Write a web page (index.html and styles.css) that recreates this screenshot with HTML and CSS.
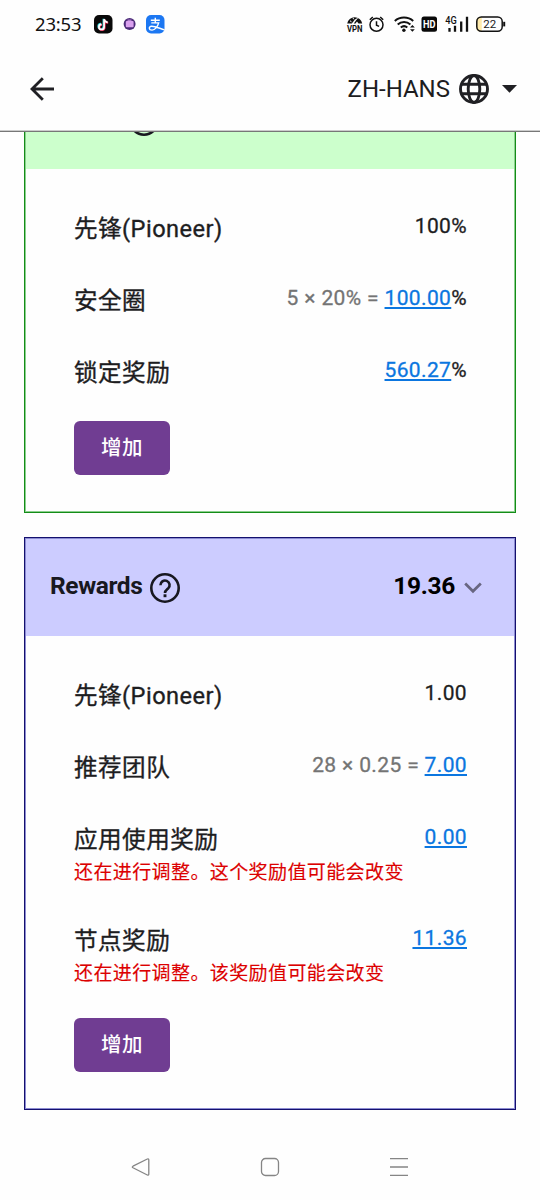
FILE: index.html
```html
<!DOCTYPE html>
<html lang="zh-Hans">
<head>
<meta charset="utf-8">
<title>Rewards</title>
<link rel="stylesheet" href="styles.css">
</head>
<body>
<div class="screen">
  <div class="status">
    <span class="clock">23:53</span>
    <svg class="apps" width="72" height="20" viewBox="0 0 72 20">
      <rect x="0" y="1" width="18.500" height="18.500" rx="5" fill="#090909"/>
      <g fill="none" stroke-width="2.100">
        <path d="M9.600 4.800v7.700a2.600 2.600 0 1 1-2.600-2.600M9.600 4.800c.3 2 1.600 3.100 3.600 3.200" stroke="#35dfe3"/>
        <path d="M10.600 5.600v7.700a2.600 2.600 0 1 1-2.600-2.600M10.600 5.600c.3 2 1.600 3.100 3.600 3.200" stroke="#f52f59"/>
        <path d="M10.100 5.200v7.700a2.600 2.600 0 1 1-2.600-2.600M10.100 5.200c.3 2 1.600 3.100 3.600 3.200" stroke="#fff" stroke-width="1.700"/>
      </g>
      <circle cx="35.600" cy="10" r="6" fill="#4b2a78"/>
      <rect x="31.800" y="7" width="7.800" height="6.200" rx="1" fill="#d9a0ee"/>
      <path d="M33.500 6.200h4" stroke="#d9a0ee"/>
      <rect x="52" y="1" width="18.500" height="18.500" rx="5" fill="#1c77f2"/>
      <g fill="none" stroke="#fff" stroke-width="1.400">
        <path d="M56.800 6.300h9M61.300 3.800v5M57.300 8.900h7.400c-1 3.600-3.700 7.200-6.600 7.200-3.600 0-3.600-3.700-.6-3.900 3.600-.2 8 2.200 13 3.700"/>
      </g>
    </svg>
    <svg class="system" width="166" height="24" viewBox="0 0 166 24">
      <path d="M1.200 11.500a7.600 7.600 0 0 1 15 0h-3.700l-1.500-2-1.500 2H7.800l2.700-3.800-1.200-.8-3.500 4.600z" fill="#111"/>
      <path d="M4 8.800l1.500 1M7 6l.8 1.300M11.500 5.800l-1.200 2" stroke="#fefefe" stroke-width="1"/>
      <text x="8.700" y="20" text-anchor="middle" textLength="15.500" lengthAdjust="spacingAndGlyphs" class="vpn">VPN</text>
      <g fill="none" stroke="#111" stroke-width="1.500">
        <circle cx="30.500" cy="12.800" r="6.500"/>
        <path d="M30.500 9.300v3.900l2.600 1.200M23.800 7.800l3-2.800M37.200 7.800l-3-2.800"/>
      </g>
      <g fill="none" stroke="#111" stroke-width="2">
        <path d="M48.800 9c5.100-4.600 13.300-4.600 18.400 0M51.700 12.400c3.600-3.200 9.100-3.200 12.700 0M54.800 15.500c2-1.700 4.500-1.700 6.500 0"/>
      </g>
      <circle cx="57.900" cy="18.300" r="1.700" fill="#111"/>
      <path d="M64 15.500l2.400-2.600 2.400 2.600zM64 17.200l2.400 2.600 2.400-2.600z" fill="#111"/>
      <rect x="75.500" y="4.500" width="15.500" height="15.300" rx="2.500" fill="#090909"/>
      <text x="83.200" y="15.900" text-anchor="middle" textLength="12.500" lengthAdjust="spacingAndGlyphs" class="hd">HD</text>
      <text x="99.300" y="12.300" textLength="11.500" lengthAdjust="spacingAndGlyphs" class="net">4G</text>
      <path d="M103.500 16v3.800M109 13.800v6M115.200 9.600v10.200M121 4.700v15.100" stroke="#111" stroke-width="2.300"/>
      <path d="M135.800 5.300h-3.500a4 4 0 0 0-2 4v6a4 4 0 0 0 2 4h3.500z" fill="#ffebad"/>
      <rect x="130.800" y="4.900" width="25.400" height="14.400" rx="4.500" fill="none" stroke="#111" stroke-width="1.500"/>
      <path d="M158.200 9.800v4.600" stroke="#111" stroke-width="2"/>
      <text x="143.800" y="16.200" text-anchor="middle" class="level">22</text>
    </svg>
  </div>

  <header class="topbar">
    <svg width="24" height="24" viewBox="0 0 24 24" fill="none" stroke="#202024" stroke-width="2.800"><path d="M24 12H2M12.800 1.200L2 12l10.800 10.800"/></svg>
    <div class="lang">
      <span>ZH-HANS</span>
      <svg width="30" height="30" viewBox="0 0 30 30" fill="none" stroke="#202024" stroke-width="2.900">
        <circle cx="15" cy="15" r="13.500"/><ellipse cx="15" cy="15" rx="5.800" ry="13.500"/><path d="M2.500 10.300h25M2.500 19.700h25"/>
      </svg>
      <svg class="caret" width="15" height="8" viewBox="0 0 15 8"><path d="M0 0h15L7.500 7.800z" fill="#202024"/></svg>
    </div>
  </header>

  <main class="content">
    <section class="card green">
      <div class="card-head">
        <svg class="help" width="30" height="30" viewBox="0 0 30 30"><circle cx="15" cy="15" r="13.700" fill="none" stroke="#181820" stroke-width="2.600"/></svg>
      </div>
      <div class="card-body">
        <div class="row"><div class="label">先锋(Pioneer)</div><div class="value">100%</div></div>
        <div class="row"><div class="label">安全圈</div><div class="value"><span class="calc">5 × 20% = </span><a>100.00</a>%</div></div>
        <div class="row"><div class="label">锁定奖励</div><div class="value"><a>560.27</a>%</div></div>
        <button class="btn">增加</button>
      </div>
    </section>

    <section class="card blue">
      <div class="card-head">
        <h2 class="title">Rewards</h2>
        <svg class="help" width="30" height="30" viewBox="0 0 30 30" fill="none" stroke="#181820">
          <circle cx="15" cy="15" r="13.700" stroke-width="2.600"/>
          <path d="M10.400 12.200a4.600 4.600 0 1 1 7.800 3.200c-1.700 1.600-3.200 2.300-3.200 4.500" stroke-width="2.600"/>
          <path d="M15 21.300v2.900" stroke-width="2.900"/>
        </svg>
        <span class="total">19.36</span>
        <svg class="chev" width="18" height="12" viewBox="0 0 18 12" fill="none" stroke="#686681" stroke-width="2.700"><path d="M1.200 1.500L9 9.300l7.800-7.800"/></svg>
      </div>
      <div class="card-body">
        <div class="row"><div class="label">先锋(Pioneer)</div><div class="value">1.00</div></div>
        <div class="row"><div class="label">推荐团队</div><div class="value"><span class="calc">28 × 0.25 = </span><a>7.00</a></div></div>
        <div class="row"><div class="label">应用使用奖励<p class="note">还在进行调整。这个奖励值可能会改变</p></div><div class="value"><a>0.00</a></div></div>
        <div class="row"><div class="label">节点奖励<p class="note">还在进行调整。该奖励值可能会改变</p></div><div class="value"><a>11.36</a></div></div>
        <button class="btn">增加</button>
      </div>
    </section>
  </main>

  <nav class="navbar">
    <svg width="20" height="20" viewBox="0 0 20 20"><path d="M2 9.200L16.300 2q1.500-.6 1.500 1v14q0 1.600-1.500 1L2 10.800q-1.400-.8 0-1.600z"/></svg>
    <svg width="20" height="20" viewBox="0 0 20 20"><rect x="1.500" y="1.500" width="17" height="17" rx="4"/></svg>
    <svg width="20" height="20" viewBox="0 0 20 20"><path d="M1 1.700h18M1 10h18M1 18.300h18"/></svg>
  </nav>
</div>
</body>
</html>
```
FILE: styles.css
```css
* { box-sizing: border-box; }
body {
  margin: 0;
  background: #fefefe;
  color: #1d1d1f;
  font-family: Roboto, "Noto Sans CJK SC", sans-serif;
}
.screen { width: 540px; height: 1200px; display: flex; flex-direction: column; overflow: hidden; }
svg { display: block; flex: none; }

.status { height: 48px; padding: 0 28px 0 35px; display: flex; align-items: center; }
.clock { width: 59px; font: 18.5px/24px "Noto Sans", sans-serif; letter-spacing: -0.2px; white-space: nowrap; color: #111; }
.system { margin-left: auto; }
.vpn { font: 700 9.5px Roboto, sans-serif; fill: #111; }
.hd { font: 700 10.5px Roboto, sans-serif; fill: #fff; }
.net { font: 500 10px Roboto, sans-serif; fill: #111; }
.level { font: 11.5px Roboto, sans-serif; fill: #222; }

.topbar {
  height: 84px;
  padding: 0 23px 1px 30px;
  display: flex;
  align-items: center;
  justify-content: space-between;
  border-bottom: 1px solid #777;
  box-shadow: inset 0 -1px #ccc;
  flex: none;
}
.lang { display: flex; align-items: center; font-size: 24px; }
.lang span { margin-right: 9px; }
.caret { margin-left: 13px; }

.content { height: 1002px; flex: none; overflow: hidden; padding: 0 24px; }
.card { border: 1px solid; padding: 1px; margin-bottom: 24px; }
.green { margin-top: -62px; height: 443px; border-color: #148c18; background: #8cd08e; }
.blue { height: 573px; border-color: #14106e; background: #8c8cd2; }
.card-head { height: 97px; padding: 0 32px 0 24px; display: flex; align-items: center; }
.green .card-head { background: #ccffcc; padding-left: 103px; }
.blue .card-head { background: #ccccff; }
.card-body { height: calc(100% - 97px); background: #fefefe; padding: 24px 47px 0 47.5px; }
.title { margin: 0; width: 100px; font-size: 24.5px; font-weight: 700; line-height: 30px; letter-spacing: -0.4px; color: #181820; }
.blue .title, .total { margin-bottom: 4px; }
.help { margin-top: 1px; }
.total { margin-left: auto; font-size: 24.5px; font-weight: 700; line-height: 30px; letter-spacing: -0.3px; color: #000; }
.chev { margin: 1px 0 0 9px; }

.row { display: flex; justify-content: space-between; padding: 18px 0; }
.label { padding-left: 0.5px; font-size: 23.6px; font-weight: 400; -webkit-text-stroke: 0.35px; letter-spacing: 0.45px; line-height: 37px; height: 36px; }
.row:has(.note) { height: 101px; }
.note { margin: -1px 0 0; color: #dc0000; font-size: 19px; line-height: 29px; -webkit-text-stroke: 0.15px; letter-spacing: 0.4px; }
.value { font-size: 21px; letter-spacing: 0.36px; line-height: 31px; height: 30px; white-space: pre; -webkit-text-stroke: 0.3px; }
.calc { color: #747474; }
.value a { color: #0b76e0; text-decoration: underline; text-decoration-thickness: 2px; text-underline-offset: 2px; }
.btn {
  display: block;
  width: 96px;
  height: 54px;
  margin: 12px 0 0 0.5px;
  border: 0;
  border-radius: 6px;
  background: #703d92;
  color: #fff;
  padding: 0;
  font: 500 20.5px/55px Roboto, "Noto Sans CJK SC", sans-serif;
  letter-spacing: 0.5px;
}

.navbar { height: 66px; padding: 0 131px; display: flex; justify-content: space-between; align-items: center; }
.navbar svg { fill: none; stroke: #858585; stroke-width: 1.3; }
```
